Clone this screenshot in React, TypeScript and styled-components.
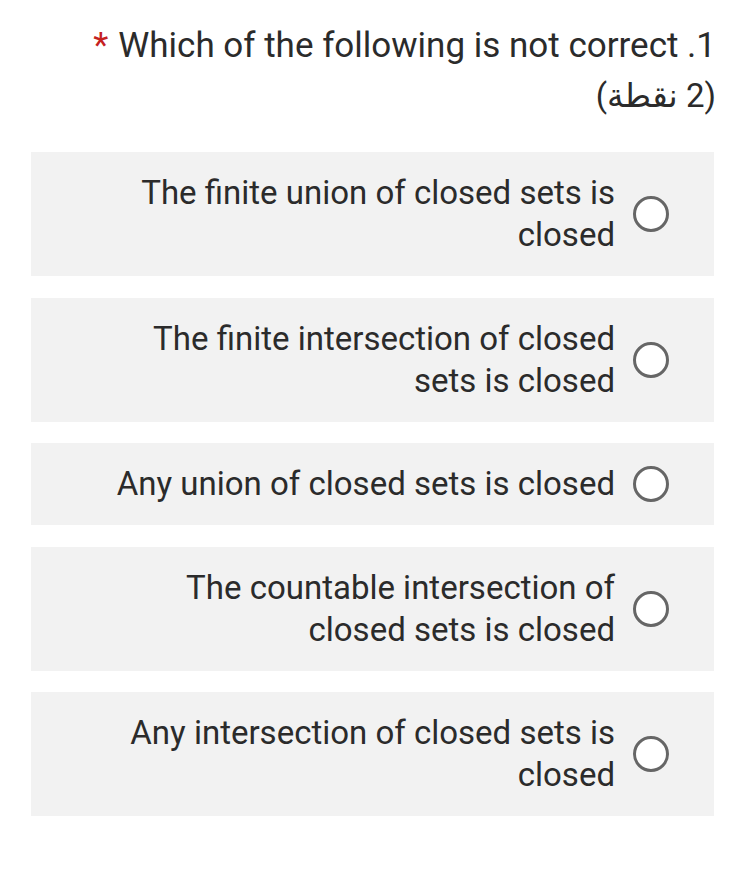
import React from "react";
import styled, { createGlobalStyle } from "styled-components";

const Global = createGlobalStyle`
  html, body { margin: 0; padding: 0; background: #ffffff; }
  body { font-family: Roboto, "Noto Sans", "DejaVu Sans", sans-serif; color: #2b2b2b; }
`;

const Page = styled.div`
  padding: 20px 31px 40px 31px;
  display: flex;
  flex-direction: column;
`;

const Header = styled.div`
  display: flex;
  flex-direction: column;
  align-items: flex-end;
  margin-bottom: 32px;
`;

const Title = styled.div`
  font-size: 35px;
  line-height: 52px;
  color: #2b2b2b;
  white-space: nowrap;
`;

const Star = styled.span`
  color: #c5221f;
  margin-right: 10px;
`;

const Points = styled.div`
  font-size: 33px;
  line-height: 48px;
  color: #2b2b2b;
`;

const List = styled.div`
  display: flex;
  flex-direction: column;
  gap: 21.5px;
  margin-right: 2px;
`;

const Card = styled.label`
  background: #f2f2f2;
  display: flex;
  justify-content: flex-end;
  align-items: center;
  gap: 18px;
  padding: 20px 45px 20px 20px;
`;

const OptionText = styled.span`
  font-size: 33px;
  line-height: 42px;
  text-align: right;
  max-width: 505px;
  color: #2b2b2b;
`;

const Radio = styled.span`
  flex: none;
  width: 30px;
  height: 30px;
  border: 3px solid #666666;
  border-radius: 50%;
  background: #ffffff;
`;

const options = [
  "The finite union of closed sets is closed",
  "The finite intersection of closed sets is closed",
  "Any union of closed sets is closed",
  "The countable intersection of closed sets is closed",
  "Any intersection of closed sets is closed",
];

export default function App() {
  return (
    <>
      <Global />
      <Page>
        <Header>
          <Title>
            <Star>*</Star>Which of the following is not correct .1
          </Title>
          <Points dir="rtl">(2 نقطة)</Points>
        </Header>
        <List>
          {options.map((o) => (
            <Card key={o}>
              <OptionText>{o}</OptionText>
              <Radio />
            </Card>
          ))}
        </List>
      </Page>
    </>
  );
}
